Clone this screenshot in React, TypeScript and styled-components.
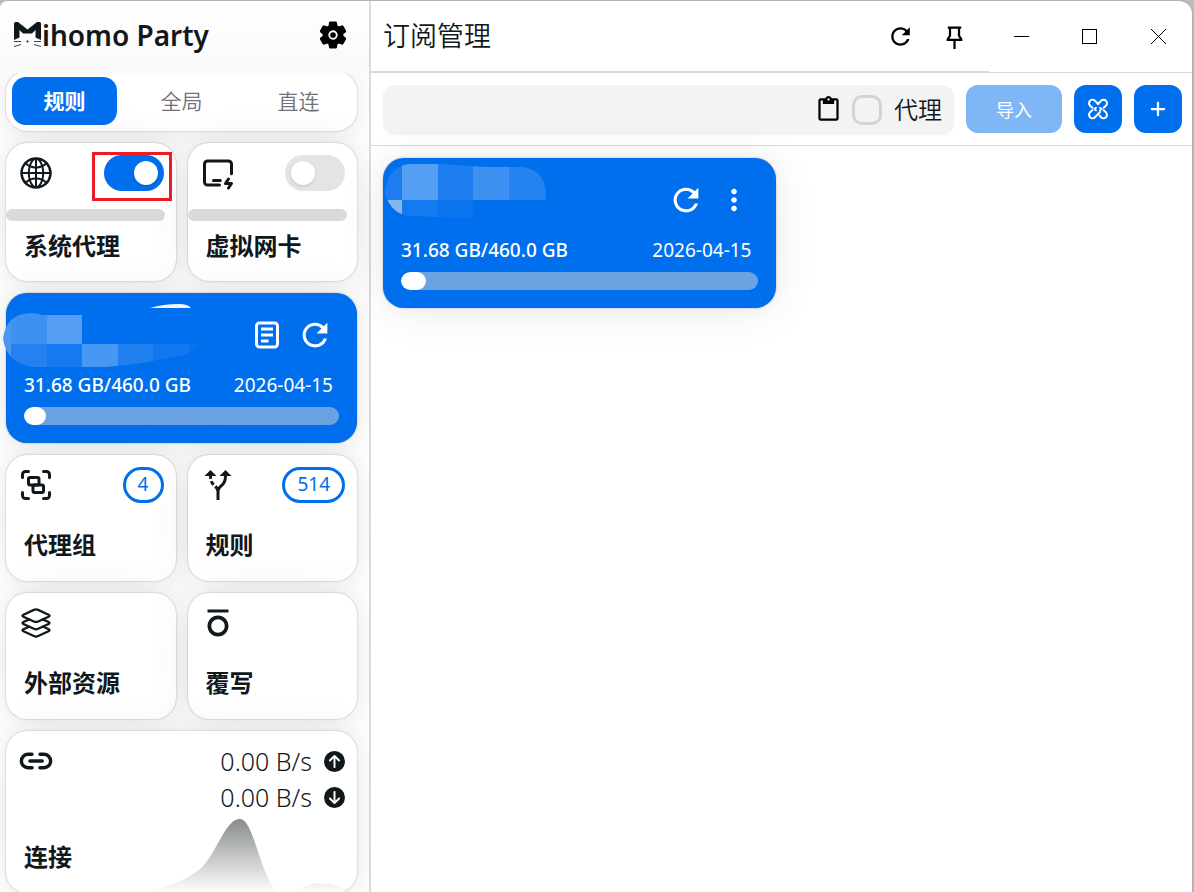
import React, { useState } from "react";
import styled, { createGlobalStyle, css } from "styled-components";
import { AiOutlineGlobal } from "react-icons/ai";
import { TbDeviceIpadHorizontalBolt } from "react-icons/tb";
import { IoMdRefresh, IoMdMore } from "react-icons/io";
import { CgLoadbarDoc } from "react-icons/cg";
import { LuGroup } from "react-icons/lu";
import { MdOutlineAltRoute, MdFormatOverline, MdContentPaste } from "react-icons/md";
import { IoLayersOutline, IoLink, IoSettings } from "react-icons/io5";
import { FaCircleArrowUp, FaCircleArrowDown, FaPlus } from "react-icons/fa6";
import { RiPushpin2Line } from "react-icons/ri";

const blue = "#006fee";
const ink = "#11181c";
const line = "#dadada";

const GlobalStyle = createGlobalStyle`
  *, *::before, *::after { box-sizing: border-box; }
  body {
    margin: 0;
    background: #bbbbbb;
    color: ${ink};
    font-family: "Noto Sans", "Noto Sans CJK SC", sans-serif;
  }
  button, input { font: inherit; color: inherit; }
  h1, h2, p { margin: 0; }
  a { color: inherit; text-decoration: none; }
`;

const cardShadow = css`
  box-shadow: 0 0 22px rgba(0, 0, 0, 0.03), 0 3px 45px rgba(0, 0, 0, 0.08),
    0 0 2px rgba(0, 0, 0, 0.3);
`;

const Shell = styled.div`
  display: flex;
  height: 100vh;
  margin-right: 1px;
  overflow: hidden;
  background: #fff;
  border-top: 1px solid #b0b0b0;
  border-right: 1px solid #b0b0b0;
  border-radius: 8px 14px 0 0;
`;

const Sidebar = styled.aside`
  flex: 0 0 371px;
  display: flex;
  flex-direction: column;
  border-right: 2px solid ${line};
  overflow: hidden;
`;

const Brand = styled.header`
  position: relative;
  z-index: 1;
  flex: none;
  display: flex;
  align-items: center;
  justify-content: space-between;
  height: 72px;
  padding: 0 18px 4px 13px;
  background: linear-gradient(#fff, #f9f9f9);
`;

const BrandName = styled.h1`
  display: flex;
  align-items: center;
  font-size: 28px;
  line-height: 36px;
  font-weight: 600;
`;

const IconButton = styled.button<{ $color?: string }>`
  display: grid;
  place-items: center;
  width: 36px;
  height: 36px;
  padding: 0;
  border: 0;
  background: none;
  color: ${(p) => p.$color || "#000"};
  cursor: pointer;
`;

const SideBody = styled.div`
  flex: 1;
  min-height: 0;
  display: grid;
  grid-template-columns: 1fr 1fr;
  align-content: start;
  gap: 12px;
  padding: 0 12px 0 6px;
  margin-top: -2px;
`;

const Card = styled.section<{ $height: number; $wide?: boolean }>`
  position: relative;
  grid-column: ${(p) => (p.$wide ? "span 2" : "auto")};
  height: ${(p) => p.$height}px;
  border-radius: 21px;
  background: #fff;
  ${cardShadow}
`;

const Tabs = styled(Card)`
  display: grid;
  grid-template-columns: repeat(3, 1fr);
  gap: 12px;
  padding: 6px;
`;

const Tab = styled.button<{ $on: boolean }>`
  padding: 0 0 2px;
  border: 0;
  border-radius: 14px;
  background: ${(p) => (p.$on ? blue : "transparent")};
  color: ${(p) => (p.$on ? "#fff" : "#71717a")};
  font-size: 21px;
  font-weight: ${(p) => (p.$on ? 700 : 350)};
  cursor: pointer;
`;

const CardTop = styled.div<{ $tall?: boolean }>`
  display: flex;
  justify-content: space-between;
  align-items: flex-start;
  height: ${(p) => (p.$tall ? 72 : 66)}px;
  padding: 12px 12px 0 12px;
`;

const CardIcon = styled.span`
  display: grid;
  place-items: center;
  width: 36px;
  height: 36px;
`;

const CardTitle = styled.h2`
  padding-left: 18px;
  font-size: 24px;
  line-height: 36px;
  font-weight: 700;
`;

const TrackLine = styled.div`
  width: 159px;
  height: 12px;
  border-radius: 6px;
  background: #dadadc;
  margin-bottom: 7px;
`;

const Switch = styled.input`
  appearance: none;
  position: relative;
  width: 60px;
  height: 36px;
  margin: 0;
  border-radius: 18px;
  background: #e4e4e7;
  cursor: pointer;
  &::after {
    content: "";
    position: absolute;
    top: 6px;
    left: 6px;
    width: 24px;
    height: 24px;
    border-radius: 50%;
    background: #fff;
    box-shadow: 0 1px 3px rgba(0, 0, 0, 0.15);
  }
  &:checked { background: ${blue}; }
  &:checked::after { left: 30px; }
`;

const Highlight = styled.div`
  position: absolute;
  top: 9px;
  right: 4px;
  width: 80px;
  height: 49px;
  border: 3px solid #ed1c24;
  pointer-events: none;
`;

const Badge = styled.span`
  min-width: 41px;
  height: 36px;
  padding: 0 12px;
  border: 3px solid ${blue};
  border-radius: 18px;
  color: ${blue};
  font-size: 19px;
  line-height: 28px;
  text-align: center;
`;

const ProfileBox = styled(Card)`
  background: ${blue};
  color: #fff;
  padding: 24px 18px 0;
`;

const ProfileActions = styled.div`
  display: flex;
  justify-content: flex-end;
  gap: 12px;
  padding-right: 6px;
`;

const ProfileInfo = styled.div`
  display: flex;
  justify-content: space-between;
  padding: 19px 6px 0 0;
  margin-bottom: 8px;
  font-size: 19px;
  line-height: 27px;
  font-weight: 500;
`;

const Expiry = styled.span`
  font-weight: 400;
`;

const Meter = styled.div`
  height: 18px;
  border-radius: 9px;
  background: #6aa2e2;
  overflow: hidden;
`;

const MeterFill = styled.div`
  height: 100%;
  border-radius: 9px;
  background: #fff;
`;

const Mosaic = styled.svg<{ $top: number; $left: number }>`
  position: absolute;
  pointer-events: none;
  top: ${(p) => p.$top}px;
  left: ${(p) => p.$left}px;
`;

const Rates = styled.div`
  display: flex;
  flex-direction: column;
`;

const Rate = styled.p`
  display: flex;
  align-items: center;
  gap: 12px;
  font-size: 25px;
  line-height: 36px;
  font-weight: 300;
`;

const ConnCard = styled(Card)`
  overflow: hidden;
`;

const ConnTitle = styled(CardTitle)`
  padding-top: 42px;
`;

const Chart = styled.svg`
  position: absolute;
  left: 0;
  bottom: 0;
  width: 100%;
  height: 76px;
`;

const Main = styled.main`
  flex: 1;
  min-width: 0;
  display: flex;
  flex-direction: column;
`;

const TitleBar = styled.header`
  display: flex;
  justify-content: space-between;
  height: 72px;
  border-bottom: 1px solid ${line};
`;

const TitleArea = styled.div`
  flex: 1;
  display: flex;
  align-items: center;
  justify-content: space-between;
  height: 72px;
  padding: 0 17px 0 12px;
  border-bottom: 2px solid ${line};
`;

const PageTitle = styled.h1`
  font-size: 27px;
  line-height: 36px;
  font-weight: 350;
`;

const TitleActions = styled.div`
  display: flex;
  gap: 18px;
`;

const WindowButtons = styled.div`
  display: grid;
  grid-template-columns: 65px 70px 68px;
`;

const WindowButton = styled.button`
  display: grid;
  place-items: center;
  height: 71px;
  padding: 0;
  border: 0;
  background: none;
`;

const Toolbar = styled.form`
  display: flex;
  gap: 12px;
  height: 73px;
  padding: 12px 10px 11px 12px;
  border-bottom: 1px solid ${line};
`;

const Field = styled.div`
  flex: 1;
  min-width: 0;
  display: flex;
  align-items: center;
  height: 49px;
  padding-right: 12px;
  border-radius: 12px;
  background: #f3f3f3;
  box-shadow: 0 1px 2px rgba(0, 0, 0, 0.05);
`;

const UrlInput = styled.input`
  flex: 1;
  min-width: 0;
  height: 100%;
  padding: 0 12px;
  border: 0;
  outline: 0;
  background: none;
  font-size: 21px;
`;

const ProxyLabel = styled.label`
  display: flex;
  align-items: center;
  gap: 12px;
  padding-left: 6px;
  font-size: 24px;
  line-height: 36px;
  font-weight: 350;
`;

const Check = styled.input`
  appearance: none;
  width: 30px;
  height: 30px;
  margin: 0;
  border: 3px solid #d4d4d8;
  border-radius: 10px;
`;

const Action = styled.button<{ $wide?: boolean }>`
  display: grid;
  place-items: center;
  width: ${(p) => (p.$wide ? 96 : 48)}px;
  height: 48px;
  padding: 0;
  border: 0;
  border-radius: 12px;
  background: ${blue};
  color: #fff;
  font-size: 18px;
  font-weight: 400;
  cursor: pointer;
  &:disabled { opacity: 0.5; cursor: default; }
`;

const Profiles = styled.div`
  display: grid;
  grid-template-columns: repeat(2, 1fr);
  gap: 12px;
  padding: 12px;
`;

function LogoM() {
  return (
    <svg width="29" height="30" viewBox="0 0 29 30" aria-hidden="true">
      <path d="M1 3.500Q1 2 2.500 2H5l9.500 7.500L24 2h2.500Q28 2 28 3.500V20l-5.500-2.500V10l-3.500 3.500h-9L6.500 10v7.500L1 20z" fill={ink} />
      <path d="M1 21.500h7M1 26.500l7-2M28 21.500h-7M28 26.500l-7-2" stroke={ink} strokeWidth="1" opacity=".8" />
      <circle cx="14.500" cy="21.500" r="1" fill={ink} />
    </svg>
  );
}

function SubStoreIcon() {
  return (
    <svg width="24" height="24" viewBox="0 0 24 24" fill="none" stroke="currentColor" strokeWidth="2" strokeLinecap="round" strokeLinejoin="round" aria-hidden="true">
      <path d="M4 8.600A3.300 3.300 0 0 1 8.900 3.800Q10 4.600 12 7.200Q14 4.600 15.100 3.800A3.300 3.300 0 0 1 20 8.600Q19 9.800 17.500 10.800" />
      <path d="M6.500 10.800Q5 9.800 4 8.600" />
      <path d="M6.500 13.200Q5 14.200 4 15.400A3.300 3.300 0 0 0 8.900 20.200L14 15" />
      <path d="M17.500 13.200Q19 14.200 20 15.400A3.300 3.300 0 0 1 15.100 20.200L13.500 18.500" />
      <path d="M10 10.600 8.600 12l1.400 1.400M14 10.600l1.400 1.400-1.400 1.400" strokeWidth="1.800" />
    </svg>
  );
}

function ProfileCard({ sidebar = false }: { sidebar?: boolean }) {
  return (
    <ProfileBox $height={150} $wide={sidebar}>
      {sidebar ? (
        <Mosaic $top={10} $left={-3} width="204" height="70" viewBox="0 0 204 70">
          <path d="M147 5Q160 1 176 1q9 0 12 4z" fill="#f4f4f4" />
          <clipPath id="smear-side">
            <path d="M0 36Q3 11 27 10q6 0 12 2h156v30q-5 7-15 10-40 9-76 12H31Q4 61 0 36z" />
          </clipPath>
          <g clipPath="url(#smear-side)">
            <path d="M0 10h8v56H0z" fill="#4a97f1" />
            <path d="M8 10h36v31H8z" fill="#3e91f1" />
            <path d="M44 12h35v29H44z" fill="#549df3" />
            <path d="M8 41h36v24H8z" fill="#2481ef" />
            <path d="M44 41h35v24H44z" fill="#157af0" />
            <path d="M79 41h36v24H79z" fill="#4797f4" />
            <path d="M115 41h35v24h-35z" fill="#2080f0" />
            <path d="M150 41h36v24h-36z" fill="#1377ef" />
            <path d="M186 41h12v24h-12z" fill="#0a73ee" />
          </g>
        </Mosaic>
      ) : (
        <Mosaic $top={5} $left={2} width="164" height="58" viewBox="0 0 164 58">
          <clipPath id="smear-main">
            <path d="M0 30Q2 4 24 1h30l48 3h35q22 2 24 26 0 24-24 24l-49 2-60-3Q6 53 0 30z" />
          </clipPath>
          <g clipPath="url(#smear-main)">
            <path d="M0 0h17v37H0z" fill="#1d7df0" />
            <path d="M17 0h36v37H17z" fill="#559ff4" />
            <path d="M53 0h35v37H53z" fill="#1e7ef0" />
            <path d="M88 0h36v37H88z" fill="#3e91f1" />
            <path d="M124 0h37v37h-37z" fill="#2583f0" />
            <path d="M0 37h17v20H0z" fill="#84b7ee" />
            <path d="M17 37h36v20H17z" fill="#147aef" />
            <path d="M53 37h35v20H53z" fill="#0a74ef" />
          </g>
        </Mosaic>
      )}
      <ProfileActions>
        {sidebar && (
          <IconButton $color="#fff" aria-label="配置"><CgLoadbarDoc size={36} /></IconButton>
        )}
        <IconButton $color="#fff" aria-label="刷新"><IoMdRefresh size={36} /></IconButton>
        {!sidebar && (
          <IconButton $color="#fff" aria-label="更多"><IoMdMore size={36} /></IconButton>
        )}
      </ProfileActions>
      <ProfileInfo>
        <span>31.68 GB/460.0 GB</span>
        <Expiry>2026-04-15</Expiry>
      </ProfileInfo>
      <Meter role="progressbar" aria-label="流量" aria-valuenow={7} aria-valuemin={0} aria-valuemax={100}>
        <MeterFill style={{ width: "6.9%" }} />
      </Meter>
    </ProfileBox>
  );
}

export default function App() {
  const [mode, setMode] = useState("规则");
  return (
    <>
      <GlobalStyle />
      <Shell>
        <Sidebar>
          <Brand>
            <BrandName aria-label="Mihomo Party"><LogoM />ihomo Party</BrandName>
            <IconButton aria-label="设置"><IoSettings size={30} /></IconButton>
          </Brand>
          <SideBody>
            <Tabs $wide $height={60} role="tablist">
              {["规则", "全局", "直连"].map((m) => (
                <Tab key={m} role="tab" aria-selected={mode === m} $on={mode === m} onClick={() => setMode(m)}>{m}</Tab>
              ))}
            </Tabs>
            <Card $height={138}>
              <CardTop>
                <CardIcon><AiOutlineGlobal size={36} /></CardIcon>
                <Switch type="checkbox" role="switch" aria-label="系统代理" defaultChecked />
              </CardTop>
              <TrackLine />
              <CardTitle>系统代理</CardTitle>
              <Highlight />
            </Card>
            <Card $height={138}>
              <CardTop>
                <CardIcon><TbDeviceIpadHorizontalBolt size={36} /></CardIcon>
                <Switch type="checkbox" role="switch" aria-label="虚拟网卡" />
              </CardTop>
              <TrackLine />
              <CardTitle>虚拟网卡</CardTitle>
            </Card>
            <ProfileCard sidebar />
            <Card $height={126}>
              <CardTop $tall>
                <CardIcon><LuGroup size={36} /></CardIcon>
                <Badge>4</Badge>
              </CardTop>
              <CardTitle><a href="#proxies">代理组</a></CardTitle>
            </Card>
            <Card $height={126}>
              <CardTop $tall>
                <CardIcon><MdOutlineAltRoute size={36} /></CardIcon>
                <Badge>514</Badge>
              </CardTop>
              <CardTitle><a href="#rules">规则</a></CardTitle>
            </Card>
            <Card $height={126}>
              <CardTop $tall><CardIcon><IoLayersOutline size={36} /></CardIcon></CardTop>
              <CardTitle><a href="#resources">外部资源</a></CardTitle>
            </Card>
            <Card $height={126}>
              <CardTop $tall><CardIcon><MdFormatOverline size={36} /></CardIcon></CardTop>
              <CardTitle><a href="#override">覆写</a></CardTitle>
            </Card>
            <ConnCard $wide $height={162}>
              <Chart viewBox="0 0 351 76" preserveAspectRatio="none" aria-hidden="true">
                <defs>
                  <linearGradient id="traffic" x1="0" y1="0" x2="0" y2="1">
                    <stop offset="0" stopColor={ink} stopOpacity="0.5" />
                    <stop offset="1" stopColor={ink} stopOpacity="0" />
                  </linearGradient>
                </defs>
                <path d="M130 76C160 72 185 62 198 48C212 32 220 2 234 2C248 2 254 60 272 76C290 76 300 66 313 66C326 66 336 70 351 76z" fill="url(#traffic)" />
              </Chart>
              <CardTop>
                <CardIcon><IoLink size={36} /></CardIcon>
                <Rates>
                  <Rate>0.00 B/s<FaCircleArrowUp size={21} /></Rate>
                  <Rate>0.00 B/s<FaCircleArrowDown size={21} /></Rate>
                </Rates>
              </CardTop>
              <ConnTitle><a href="#connections">连接</a></ConnTitle>
            </ConnCard>
          </SideBody>
        </Sidebar>
        <Main>
          <TitleBar>
            <TitleArea>
              <PageTitle>订阅管理</PageTitle>
              <TitleActions>
                <IconButton aria-label="刷新"><IoMdRefresh size={27} /></IconButton>
                <IconButton aria-label="置顶"><RiPushpin2Line size={27} /></IconButton>
              </TitleActions>
            </TitleArea>
            <WindowButtons>
              <WindowButton aria-label="最小化">
                <svg width="15" height="15" stroke="#000"><path d="M0 7.500h15" /></svg>
              </WindowButton>
              <WindowButton aria-label="最大化">
                <svg width="15" height="15" stroke="#000" fill="none"><rect x=".5" y=".5" width="14" height="14" /></svg>
              </WindowButton>
              <WindowButton aria-label="关闭">
                <svg width="15" height="15" stroke="#000"><path d="M0 0l15 15M15 0L0 15" /></svg>
              </WindowButton>
            </WindowButtons>
          </TitleBar>
          <Toolbar onSubmit={(e) => e.preventDefault()}>
            <Field>
              <UrlInput type="text" aria-label="订阅链接" />
              <IconButton type="button" aria-label="粘贴"><MdContentPaste size={27} /></IconButton>
              <ProxyLabel><Check type="checkbox" />代理</ProxyLabel>
            </Field>
            <Action $wide disabled>导入</Action>
            <Action type="button" aria-label="Sub-Store"><SubStoreIcon /></Action>
            <Action type="button" aria-label="新建"><FaPlus size={18} /></Action>
          </Toolbar>
          <Profiles>
            <ProfileCard />
          </Profiles>
        </Main>
      </Shell>
    </>
  );
}
